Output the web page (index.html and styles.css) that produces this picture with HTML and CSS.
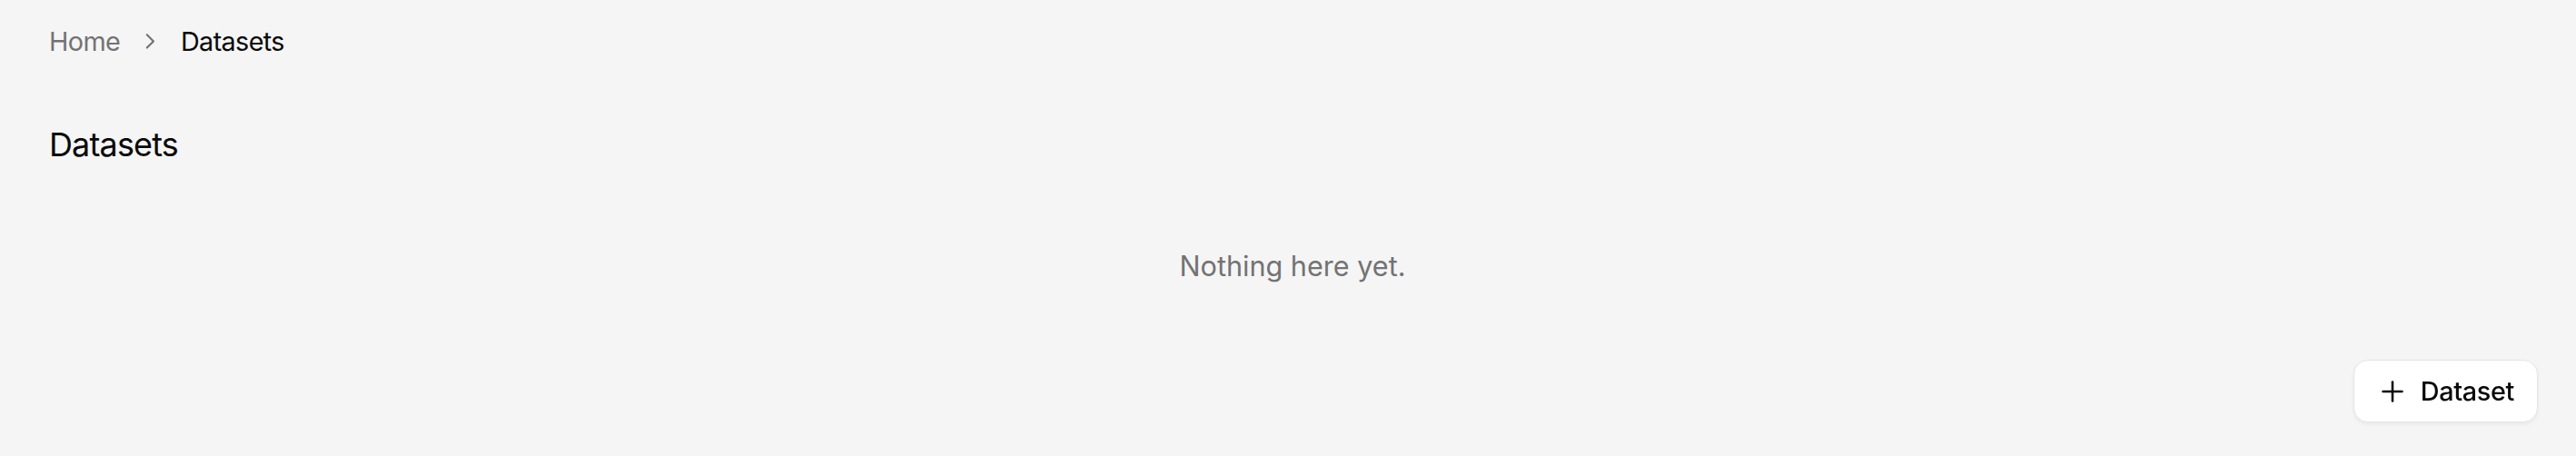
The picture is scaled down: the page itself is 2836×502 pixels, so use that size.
FILE: index.html
```html
<!DOCTYPE html>
<html lang="en">
<head>
<meta charset="utf-8">
<title>Datasets</title>
<link rel="stylesheet" href="styles.css">
</head>
<body>
<main class="page">
  <nav class="breadcrumb">
    <a class="crumb crumb-link" href="#">Home</a>
    <svg class="crumb-sep" viewBox="0 0 24 24" fill="none" stroke="currentColor" stroke-width="2" stroke-linecap="round" stroke-linejoin="round"><path d="m9 18 6-6-6-6"/></svg>
    <span class="crumb crumb-current">Datasets</span>
  </nav>
  <h1 class="title">Datasets</h1>
  <p class="empty">Nothing here yet.</p>
</main>
<button class="fab" type="button">
  <svg class="fab-icon" viewBox="0 0 24 24" fill="none" stroke="currentColor" stroke-width="2" stroke-linecap="round" stroke-linejoin="round"><path d="M5 12h14"/><path d="M12 5v14"/></svg>
  <span class="fab-label">Dataset</span>
</button>
</body>
</html>
```
FILE: styles.css
```css
html, body {
  margin: 0;
  padding: 0;
  background: #f5f5f5;
  height: 100%;
}
body {
  font-family: Inter, "Noto Sans", "Liberation Sans", sans-serif;
  color: #0a0a0a;
}
.page {
  padding: 24px 54px 0 54px;
}
.breadcrumb {
  display: flex;
  align-items: center;
  gap: 19px;
  font-size: 28.8px;
  line-height: 43.2px;
  letter-spacing: -0.022em;
}
.crumb-link {
  color: #737373;
  text-decoration: none;
}
.crumb-current {
  color: #0a0a0a;
}
.crumb-sep {
  width: 28.8px;
  height: 28.8px;
  color: #737373;
  stroke-width: 1.8;
}
.title {
  margin: 65px 0 0 0;
  font-size: 36px;
  line-height: 54px;
  font-weight: 400;
  letter-spacing: -0.024em;
}
.empty {
  margin: 84px 0 0 0;
  padding-left: 10px;
  font-size: 30.6px;
  line-height: 45px;
  text-align: center;
  color: #737373;
}
.fab {
  position: fixed;
  right: 42px;
  bottom: 37px;
  display: flex;
  align-items: center;
  gap: 13px;
  padding: 15.5px 25px 15.5px 24px;
  background: #ffffff;
  border: 1.5px solid #e5e5e5;
  border-radius: 16px;
  box-shadow: 0 2px 4px rgba(0,0,0,0.06);
  font-family: Inter, "Noto Sans", "Liberation Sans", sans-serif;
  font-size: 28.8px;
  font-weight: 500;
  color: #0a0a0a;
  cursor: pointer;
}
.fab-icon {
  width: 36px;
  height: 36px;
  stroke-width: 1.7;
}
.fab-label {
  line-height: 36px;
  letter-spacing: -0.012em;
}
```
